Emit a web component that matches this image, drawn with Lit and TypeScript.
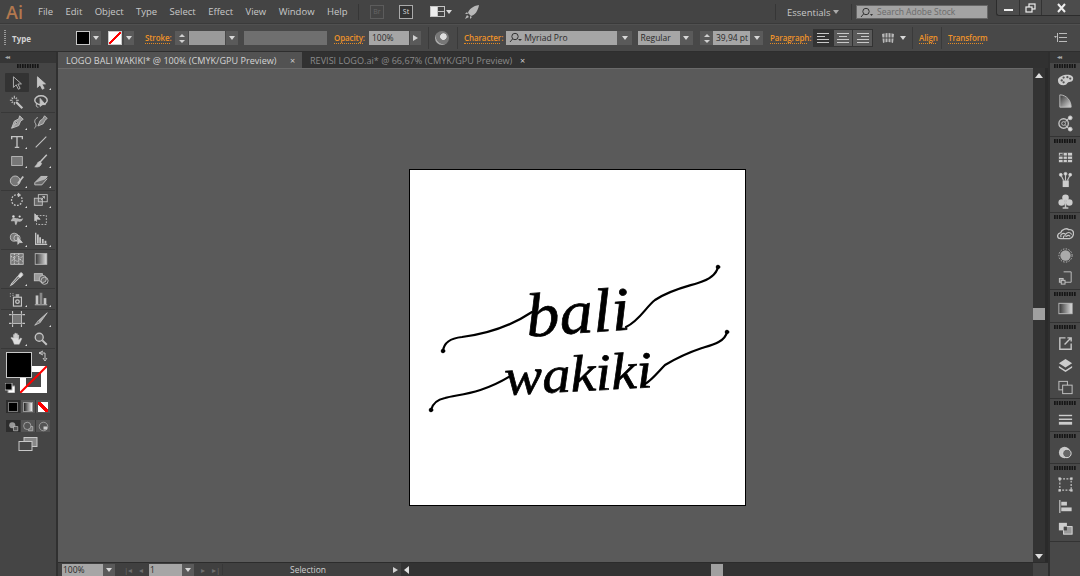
import { LitElement, html, css, svg } from 'lit';
import { customElement } from 'lit/decorators.js';

// tool and panel glyphs, 18x18 box, light grey stroke unless stated
const ICONS: Record<string, unknown> = {
  select: svg`<path d="M5 2v12l3-3 2.500 5 2-1-2.500-4.800 4-.2z" fill="#333" stroke="#bbb"/>`,
  direct: svg`<path d="M5 2v12l3-3 2.500 5 2-1-2.500-4.800 4-.2z" fill="#c4c4c4" stroke="#c4c4c4"/>`,
  wand: svg`<path d="M8 9l7 7" stroke-width="2.500"/><path d="M6 2v3M6 9v3M1 7h3M8 7h3M3 4l1.500 1.500M9 4L7.500 5.500M3 10l1.500-1.500" stroke-width="1.200"/>`,
  lasso: svg`<ellipse cx="9" cy="7" rx="7" ry="5" stroke-width="1.600"/><path d="M8 5v9l2.500-2.200 3.500.2z" fill="#c4c4c4"/><path d="M4 11c-1 2 0 4 2 4"/>`,
  pen: svg`<path d="M12 2l4 4-3 2-2 5-8 3 3-8 5-2.500z" fill="#9a9a9a"/><path d="M3 16l5-6"/><circle cx="8.500" cy="9.500" r="1" fill="#333"/>`,
  curve: svg`<path d="M13 2l3 3-2.500 2-2 4-6 2.500 2.500-6 3-2z" fill="#8a8a8a"/><path d="M5.500 4C2 5 1 9 3 11c1 2 0 4-1.500 5"/>`,
  type: svg`<path d="M3 6V3h12v3M9 3v12M6.500 15h5" stroke-width="1.500"/>`,
  line: svg`<path d="M3 15L15 3" stroke-width="1.200"/>`,
  rect: svg`<rect x="3" y="4" width="12" height="10" fill="#777" stroke="#bbb"/>`,
  brush: svg`<path d="M15.500 2L8 10" stroke-width="1.600"/><path d="M7.500 9.500c-2 .5-2.500 2-3 3.500L2 15.500c3 .5 7 0 7.500-4z" fill="#c4c4c4"/>`,
  shaper: svg`<circle cx="7" cy="10" r="5.500" fill="#777"/><path d="M10 13l6-8" stroke-width="2"/>`,
  eraser: svg`<path d="M2 12l7-7h7l-6 8H4z" fill="#b4b4b4"/><path d="M2 12v2.500h8l6-7" fill="#6a6a6a"/>`,
  rotate: svg`<path d="M14 6a6 6 0 1 1-3-2.500" stroke-dasharray="2 1.500" stroke-width="1.500"/><path d="M10 1l3 2.500-3 2" fill="#c4c4c4"/>`,
  scale: svg`<rect x="1.500" y="7" width="9" height="8" fill="#666"/><rect x="6" y="3" width="10" height="8"/><path d="M9 9l4-4M10.500 5H13v2.500"/>`,
  puppet: svg`<path d="M2 10c3-6 5-2 7-3 2 0 4 2 7 0-1 4-5 5-6 3l-2 5c-2-1-1-3-2-5-1 0-3 1-4 0z" fill="#b4b4b4" stroke="none"/><circle cx="5" cy="5" r="1.400" fill="#ddd" stroke="none"/><circle cx="12" cy="5" r="1.200" fill="#ddd" stroke="none"/>`,
  free: svg`<rect x="4" y="4" width="11" height="10" stroke-dasharray="2 1.500"/><path d="M2 2v8l2.500-2 3.500.2z" fill="#c4c4c4"/>`,
  builder: svg`<circle cx="6" cy="7" r="4.500" fill="#777"/><circle cx="9" cy="8" r="3.500"/><path d="M10 7v8l2-2h3z" fill="#c4c4c4"/>`,
  graph3: svg`<path d="M3 2v13h13" stroke-width="1.500"/><path d="M5.500 4v10M8 7v7M11 9v5M14 11v3" stroke-width="2"/>`,
  mesh: svg`<rect x="2" y="3" width="14" height="12" fill="#777"/><path d="M2 6l4 2 3-3 3 3 4-2M3 11l3-2 3 3 3-3 4 3M6 3v12M11 3v12" stroke="#ddd" stroke-dasharray="1.500 1"/>`,
  grad: svg`<defs><linearGradient id="g1"><stop offset="0" stop-color="#333"/><stop offset="1" stop-color="#ddd"/></linearGradient></defs><rect x="2.500" y="3" width="13" height="12" fill="url(#g1)" stroke="#bbb"/>`,
  dropper: svg`<path d="M14 2c2 1 2 3 .5 4L12 8l-2-2 2.500-3.500c.5-.5 1-.5 1.500-.5z" fill="#ddd"/><path d="M10 6l-7 8-1 2 2-1 7-7" stroke-width="1.200"/>`,
  blend: svg`<rect x="1.500" y="3" width="9" height="8" fill="#999"/><circle cx="11" cy="9" r="4" fill="#666"/><circle cx="13" cy="11" r="4"/>`,
  spray: svg`<rect x="5" y="7" width="9" height="10" stroke-width="1.300"/><rect x="7.500" y="3.500" width="4" height="3.500" fill="#aaa" stroke="none"/><circle cx="9.500" cy="12" r="2" stroke-width="1.500"/><path d="M1 3h1M4 3h1M1 6h1M4 5h1" stroke-width="1.200"/>`,
  bars: svg`<path d="M2 15.500h14"/><rect x="3" y="5" width="3" height="10" fill="#c4c4c4" stroke="none"/><rect x="7.500" y="2" width="3" height="13" fill="#888" stroke="none"/><rect x="12" y="8" width="3" height="7" fill="#c4c4c4" stroke="none"/>`,
  artboard: svg`<rect x="4" y="4" width="10" height="10" fill="#777"/><path d="M4 0v3M14 0v3M4 15v3M14 15v3M0 4h3M0 14h3M15 4h3M15 14h3" stroke-width="1.300"/>`,
  slice: svg`<path d="M16 2L6 11l2 2z" fill="#aaa"/><path d="M6 11l-4 5 6-3" fill="#777"/>`,
  hand: svg`<path d="M4 10L2 8l1-1 2 1V4h1.500v4-5.500H8V8 3h1.500v5-3.500H11V10l2-2 1.500 .5-3 6.500H6z" fill="#ddd" stroke="#bbb" stroke-width=".5"/>`,
  zoom: svg`<circle cx="7" cy="7" r="4.500" fill="#5b5b5b" stroke-width="1.500"/><path d="M10.500 10.500l5 5" stroke-width="2.200"/>`,
  palette: svg`<path d="M1 10c0-4 6-6 10-6s7 2 6 5-3 2-5 3-1 3-5 3-6-2-6-5z" fill="#ccc" stroke="none"/><circle cx="5" cy="10" r="1.200" fill="#555" stroke="none"/><circle cx="7" cy="7" r="1.200" fill="#555" stroke="none"/><circle cx="11" cy="6.500" r="1.200" fill="#555" stroke="none"/><circle cx="14" cy="8" r="1.200" fill="#555" stroke="none"/><circle cx="7" cy="12" r="1.200" fill="#555" stroke="none"/>`,
  guide: svg`<defs><linearGradient id="g2" x1="0" y1="0" x2="1" y2="1"><stop offset="0" stop-color="#333"/><stop offset="1" stop-color="#ddd"/></linearGradient></defs><path d="M3 2c7 0 12 6 12 13H3z" fill="url(#g2)" stroke="#bbb"/>`,
  nodes: svg`<circle cx="7" cy="9" r="5" stroke-width="1.400"/><circle cx="7" cy="9" r="2"/><path d="M9 7l5-5M9 11l5 5" stroke-width="1.200"/><circle cx="14" cy="3" r="2" fill="#ddd"/><circle cx="14" cy="15" r="2" fill="#ddd"/>`,
  swatches: svg`<rect x="2" y="4" width="14" height="10" fill="#ccc" stroke="none"/><path d="M2 7.500h14M2 11h14M6.500 4v10M11 4v10" stroke="#444"/><rect x="3" y="5" width="3" height="2" fill="#555" stroke="none"/>`,
  brushes: svg`<rect x="6" y="10" width="6.500" height="7" fill="#ccc" stroke="none"/><path d="M7 10L4 4M9 10V2M11 10l3-6" stroke-width="1.200"/><circle cx="4" cy="4" r="1.500" fill="#ddd"/><circle cx="9" cy="3" r="1.500" fill="#ddd"/><circle cx="14" cy="4" r="1.500" fill="#ddd"/>`,
  club: svg`<circle cx="9" cy="5" r="3.500" fill="#ccc" stroke="none"/><circle cx="5" cy="10" r="3.500" fill="#ccc" stroke="none"/><circle cx="13" cy="10" r="3.500" fill="#ccc" stroke="none"/><path d="M9 7v8M6 16h6" stroke-width="1.600"/>`,
  cloud: svg`<path d="M4 14.500c-4.500 0-4.500-5.500 0-6.500 1-4 6.500-5 8.500-3 4-1 6 3 4.500 6-1 2.500-3 3.500-6 3.500z" stroke-width="1.400"/><path d="M4.500 13c-2-3 2-5.500 4.500-3 2-3 5.500-2.500 6.500 0M7 14c-1-2 1-3.500 3-2 1.500-1.500 3-1 4 0" stroke-width="1.200"/>`,
  circle: svg`<circle cx="9" cy="9" r="5.500" fill="#aaa" stroke="none"/><circle cx="9" cy="9" r="7" stroke-dasharray="1.500 1.500"/>`,
  transformBox: svg`<path d="M7 3h8v11H8"/><rect x="2.500" y="10" width="4" height="4" fill="#888"/><rect x="4.500" y="12" width="4" height="4" fill="#555"/>`,
  gradBox: svg`<defs><linearGradient id="g3"><stop offset="0" stop-color="#333"/><stop offset="1" stop-color="#ddd"/></linearGradient></defs><rect x="2" y="3.500" width="14" height="11" fill="url(#g3)" stroke="#bbb"/>`,
  exportBox: svg`<path d="M9 3H3v12h12V9" stroke-width="1.500"/><path d="M8 10l7-7M11 3h4v4" stroke-width="1.500"/>`,
  layers: svg`<path d="M9 2l7 4.500-7 4.500-7-4.500z" fill="#ccc" stroke="none"/><path d="M2 9.500L9 14l7-4.500v1.800L9 16l-7-4.700z" fill="#ccc" stroke="none"/>`,
  artboards: svg`<rect x="2" y="2.500" width="9" height="9"/><rect x="6" y="6.500" width="10" height="9" fill="#484848"/>`,
  lines: svg`<rect x="2" y="4" width="14" height="1.500" fill="#ccc" stroke="none"/><rect x="2" y="8" width="14" height="1.500" fill="#ccc" stroke="none"/><rect x="2" y="11.500" width="14" height="3" fill="#ccc" stroke="none"/>`,
  appearance: svg`<circle cx="8" cy="9" r="6" fill="#c8c8c8" stroke="none"/><circle cx="10.500" cy="10" r="4.500" fill="#666" stroke="#ddd"/>`,
  dashbox: svg`<rect x="3" y="3" width="12" height="12" stroke-dasharray="2 1.500" stroke-width="1.300"/><rect x="1.500" y="1.500" width="2.500" height="2.500" fill="#ccc" stroke="none"/><rect x="14" y="1.500" width="2.500" height="2.500" fill="#ccc" stroke="none"/><rect x="1.500" y="14" width="2.500" height="2.500" fill="#ccc" stroke="none"/><rect x="14" y="14" width="2.500" height="2.500" fill="#ccc" stroke="none"/>`,
  alignLeft: svg`<path d="M3 2v14" stroke-width="1.300"/><rect x="4.500" y="4" width="6" height="4" fill="#ccc" stroke="none"/><rect x="4.500" y="10" width="11" height="4" fill="#ccc" stroke="none"/>`,
  pathfinder: svg`<rect x="2" y="3" width="8.500" height="8" fill="#ccc" stroke="none"/><rect x="7" y="7" width="9" height="8" fill="#999" stroke="#ddd"/><rect x="7" y="7" width="3.500" height="4" fill="#444" stroke="none"/>`,
  drawNormal: svg`<circle cx="7" cy="7" r="5" fill="#999" stroke="none"/><path d="M9 9h7v7H9z" fill="#555" stroke="#ccc"/>`,
  drawBehind: svg`<path d="M9 9h7v7H9z" fill="#777" stroke="#ccc"/><circle cx="7" cy="8" r="6" fill="#555" stroke="#ccc"/>`,
  drawInside: svg`<circle cx="9" cy="9" r="7"/><path d="M9 9h6v5H9z" fill="#ccc" stroke="none"/>`,
};

const icon = (name: string) =>
  html`<svg class="ico" viewBox="0 0 18 18" fill="none" stroke="#c4c4c4">${ICONS[name]}</svg>`;

// [icon, has flyout corner]
const TOOL_GROUPS: [string, boolean][][] = [
  [['select', false], ['direct', true], ['wand', false], ['lasso', false]],
  [['pen', true], ['curve', true], ['type', true], ['line', true], ['rect', true], ['brush', true], ['shaper', true], ['eraser', true]],
  [['rotate', true], ['scale', true], ['puppet', true], ['free', false], ['builder', true], ['graph3', true]],
  [['mesh', false], ['grad', false], ['dropper', true], ['blend', false]],
  [['spray', true], ['bars', true]],
  [['artboard', false], ['slice', true], ['hand', true], ['zoom', false]],
];

const DOCK_GROUPS: { cls: string; icons: string[] }[] = [
  { cls: 'd1', icons: ['palette', 'guide', 'nodes'] },
  { cls: 'd2', icons: ['swatches', 'brushes', 'club'] },
  { cls: 'd3', icons: ['cloud', 'circle', 'transformBox'] },
  { cls: 'd4', icons: ['gradBox'] },
  { cls: 'd5', icons: ['exportBox', 'layers', 'artboards'] },
  { cls: 'd6', icons: ['lines'] },
  { cls: 'd7', icons: ['appearance'] },
  { cls: 'd8', icons: ['dashbox', 'alignLeft', 'pathfinder'] },
];

const MENUS = ['File', 'Edit', 'Object', 'Type', 'Select', 'Effect', 'View', 'Window', 'Help'];

@customElement('app-root')
export class AppRoot extends LitElement {
  static styles = css`
    :host {
      display: block;
      width: 1080px;
      height: 576px;
      overflow: hidden;
      font-family: 'Open Sans', 'Noto Sans', sans-serif;
      font-size: 9px;
      color: #c8c8c8;
      background: #434343;
    }
    .app {
      display: flex;
      flex-direction: column;
      height: 576px;
    }
    .ico {
      display: block;
      width: 16px;
      height: 16px;
    }

    /* menu row */
    .menubar {
      height: 24px;
      flex: none;
      display: flex;
      align-items: center;
      background: #444444;
      border-bottom: 1px solid #3a3a3a;
      box-sizing: border-box;
      position: relative;
    }
    .ai {
      width: 38px;
      box-sizing: border-box;
      padding-left: 6px;
      font-size: 18px;
      font-weight: 600;
      color: #b2784e;
    }
    .menus {
      display: flex;
      gap: 12.4px;
      font-size: 9.5px;
      width: 320px;
    }
    .vsep {
      width: 1px;
      height: 16px;
      flex: none;
      background: #363636;
    }
    .badge {
      width: 12px;
      height: 12px;
      margin-left: 11px;
      border: 1px solid #5c5c5c;
      color: #666;
      font-size: 7px;
      line-height: 12px;
      text-align: center;
      flex: none;
    }
    .badge.on {
      margin-left: 15px;
      border-color: #aaa;
      background: #333;
      color: #ddd;
    }
    .arrange {
      width: 15px;
      height: 11px;
      margin-left: 17px;
      background: #c4c4c4;
      display: grid;
      grid-template-columns: 6px 6px;
      grid-template-rows: 4px 4px;
      gap: 1px;
      padding: 1px;
      box-sizing: border-box;
    }
    .arrange i {
      background: #444;
    }
    .arrange i:first-child {
      grid-row: span 2;
      background: #eee;
    }
    .caret {
      width: 0;
      height: 0;
      flex: none;
      border: 3px solid transparent;
      border-top: 4px solid #d8d8d8;
      border-bottom: 0;
    }
    .rocket {
      width: 16px;
      height: 16px;
      margin-left: 12px;
    }
    .essentials-wrap {
      display: flex;
      align-items: center;
      position: absolute;
      left: 775px;
      top: 3px;
      height: 18px;
    }
    .essentials {
      font-size: 9.5px;
      width: 57px;
      box-sizing: border-box;
      padding-left: 11px;
    }
    .essentials-wrap .vsep:last-child {
      margin-left: 12px;
    }
    .essentials-wrap .caret {
      border-top-color: #aaa;
    }
    .search {
      position: absolute;
      left: 856px;
      top: 5px;
      width: 132px;
      height: 14px;
      box-sizing: border-box;
      background: #a3a3a3;
      border: 1px solid #666;
      color: #6a6a6a;
      font-size: 8.5px;
      line-height: 12px;
      display: flex;
      align-items: center;
      gap: 4px;
      padding-left: 3px;
    }
    .search svg {
      width: 13px;
      height: 11px;
      flex: none;
    }
    .winbtns {
      position: absolute;
      right: 0;
      top: 0;
      display: flex;
      height: 15px;
      background: #4c4c4c;
      border: 1px solid #2c2c2c;
      border-top: 0;
      border-right: 0;
      border-bottom-left-radius: 3px;
    }
    .winbtns div {
      display: flex;
      align-items: center;
      justify-content: center;
      border-left: 1px solid #333;
    }
    .winbtns div:first-child {
      border-left: 0;
    }
    .winbtns .min {
      width: 22px;
    }
    .winbtns .max {
      width: 21px;
    }
    .winbtns .cls {
      width: 38px;
    }
    .winbtns svg {
      width: 11px;
      height: 10px;
    }

    /* control row */
    .control {
      height: 28px;
      flex: none;
      display: flex;
      align-items: center;
      background: #484848;
      border-top: 1px solid #505050;
      border-bottom: 1px solid #2e2e2e;
      box-sizing: border-box;
      padding-left: 4px;
      font-size: 8.5px;
    }
    .grip-v {
      width: 2px;
      height: 16px;
      flex: none;
      background-image: linear-gradient(#999 50%, transparent 50%);
      background-size: 2px 2px;
    }
    .type-label {
      font-weight: 700;
      margin-left: 6px;
      width: 64px;
      color: #d2d2d2;
      font-size: 8px;
    }
    .swatch {
      width: 14px;
      height: 14px;
      box-sizing: border-box;
      border: 1px solid #c8c8c8;
      flex: none;
    }
    .swatch.black {
      background: #000;
    }
    .swatch.none {
      background: linear-gradient(to top left, #fff 44%, #f00 44%, #f00 56%, #fff 56%);
      margin-left: 7px;
    }
    .dd {
      height: 14px;
      flex: none;
      background: #5a5a5a;
      display: flex;
      align-items: center;
      justify-content: center;
    }
    .link {
      color: #ef9329;
      flex: none;
      border-bottom: 1px dotted #e38a25;
      line-height: 10px;
      white-space: nowrap;
      font-size: 8px;
      font-weight: 600;
      letter-spacing: -0.1px;
    }
    .field {
      height: 14px;
      flex: none;
      box-sizing: border-box;
      background: #a6a6a6;
      color: #2a2a2a;
      padding-left: 3px;
      line-height: 14px;
      white-space: nowrap;
      overflow: hidden;
    }
    .field svg {
      vertical-align: -2px;
    }
    .field.blank {
      background: #9a9a9a;
    }
    .field.off {
      background: #6f6f6f;
    }
    .spin {
      width: 13px;
      height: 14px;
      flex: none;
      background: #5a5a5a;
      display: flex;
      flex-direction: column;
      align-items: center;
      justify-content: space-around;
      padding: 1px 0;
      box-sizing: border-box;
    }
    .spin i {
      width: 0;
      height: 0;
      border: 3px solid transparent;
      border-bottom: 3px solid #d0d0d0;
      border-top: 0;
    }
    .spin i:last-child {
      transform: scaleY(-1);
    }
    .tri-r {
      width: 0;
      height: 0;
      flex: none;
      border: 3px solid transparent;
      border-left: 5px solid #d0d0d0;
      border-right: 0;
    }
    .csep {
      width: 1px;
      height: 22px;
      flex: none;
      background: #3a3a3a;
    }
    .globe {
      width: 14px;
      height: 14px;
      flex: none;
      border-radius: 50%;
      background: radial-gradient(circle at 60% 40%, #ddd 0 25%, #777 30% 60%, #aaa 65%);
    }
    .aligns {
      display: flex;
      width: 60px;
      height: 18px;
      flex: none;
      background: #333;
      border: 1px solid #333;
      box-sizing: border-box;
      gap: 1px;
    }
    .aligns div {
      flex: 1;
      background: #5a5a5a;
      display: flex;
      flex-direction: column;
      align-items: center;
      justify-content: center;
      gap: 2px;
    }
    .aligns div.on {
      background: #333;
    }
    .aligns i {
      display: block;
      width: 12px;
      height: 1px;
      background: #c8c8c8;
    }
    .aligns .l i:nth-child(2) {
      width: 8px;
      margin-right: 4px;
    }
    .aligns .c i:nth-child(2) {
      width: 8px;
    }
    .aligns .r i:nth-child(2) {
      width: 8px;
      margin-left: 4px;
    }
    .warp {
      width: 14px;
      height: 13px;
      flex: none;
    }
    .panelmenu {
      width: 13px;
      height: 10px;
      flex: none;
      margin-left: auto;
      margin-right: 13px;
    }
    .m1 { margin-left: 1px; }
    .m2 { margin-left: 2px; }
    .m3 { margin-left: 3px; }
    .m45 { margin-left: 4.5px; }
    .m5 { margin-left: 5px; }
    .m55 { margin-left: 5.5px; }
    .m6 { margin-left: 6px; }
    .m65 { margin-left: 6.5px; }
    .m7 { margin-left: 7px; }
    .m8 { margin-left: 8px; }
    .m11 { margin-left: 11px; }
    .w10 { width: 10px; }
    .w11 { width: 11px; }
    .w12 { width: 12px; }
    .w13 { width: 13px; }
    .w135 { width: 13.5px; }
    .w15 { width: 15px; }
    .w17 { width: 17px; }
    .w25 { width: 25px; }
    .w29 { width: 29px; }
    .w35 { width: 35px; }
    .w36 { width: 36px; }
    .w37 { width: 37px; }
    .w40 { width: 40px; }
    .w42 { width: 42px; }
    .w83 { width: 83px; }
    .w111 { width: 111px; }

    /* body */
    .body {
      flex: 1;
      min-height: 0;
      display: flex;
    }
    .toolbar {
      width: 56px;
      flex: none;
      background: #454545;
      border-right: 2px solid #303030;
      display: flex;
      flex-direction: column;
    }
    .panel-head {
      height: 11px;
      flex: none;
      background: #363636;
      color: #aaa;
      font-size: 6px;
      line-height: 11px;
      padding-left: 5px;
      letter-spacing: -1px;
    }
    .grip-h {
      height: 4px;
      width: 22px;
      flex: none;
      margin: 1px auto 0;
      background-image: linear-gradient(90deg, #161616 60%, transparent 60%);
      background-size: 2.5px 4px;
    }
    .toolbar .grip-h {
      margin-bottom: 5px;
    }
    .tools {
      display: grid;
      grid-template-columns: 24px 24px;
      grid-auto-rows: 19.3px;
      padding: 0 4px;
      border-bottom: 1px solid #383838;
      margin: 0 1px;
    }
    .tool {
      position: relative;
      display: flex;
      align-items: center;
      justify-content: center;
    }
    .tool.active::before {
      content: '';
      position: absolute;
      inset: 0;
      background: #333;
      border-radius: 1px;
    }
    .tool .ico {
      position: relative;
    }
    .tool.fly::after {
      content: '';
      position: absolute;
      right: 2px;
      bottom: 2px;
      border: 1.5px solid transparent;
      border-right-color: #ddd;
      border-bottom-color: #ddd;
    }
    .colors {
      position: relative;
      height: 50px;
      flex: none;
    }
    .fillbox {
      position: absolute;
      left: 6px;
      top: 3px;
      width: 26px;
      height: 26px;
      box-sizing: border-box;
      background: #000;
      border: 1px solid #c8c8c8;
      z-index: 1;
    }
    .strokebox {
      position: absolute;
      left: 20px;
      top: 17px;
      width: 27px;
      height: 27px;
      box-sizing: border-box;
      background: #fff;
      padding: 6px;
    }
    .strokebox i {
      display: block;
      height: 100%;
      background: #4a4a4a;
    }
    .strokebox svg {
      position: absolute;
      inset: 0;
      width: 27px;
      height: 27px;
    }
    .swap {
      position: absolute;
      left: 38px;
      top: 1px;
      width: 10px;
      height: 12px;
    }
    .defaults {
      position: absolute;
      left: 5px;
      top: 34px;
      width: 10px;
      height: 10px;
    }
    .modes {
      display: flex;
      margin: 1px 6px 0;
      height: 13px;
      background: #3a3a3a;
      gap: 1px;
    }
    .modes > div {
      flex: 1;
      display: flex;
      align-items: center;
      justify-content: center;
      background: #555;
    }
    .modes > div.on {
      background: #2d2d2d;
    }
    .modes.second {
      margin-top: 7px;
      height: 12px;
    }
    .mini-swatch {
      width: 10px;
      height: 10px;
    }
    .black-mini {
      background: #000;
      border: 1px solid #777;
      box-sizing: border-box;
    }
    .grad-mini {
      background: linear-gradient(90deg, #222, #eee);
      border: 1px solid #999;
      box-sizing: border-box;
    }
    .none-mini {
      background: linear-gradient(to top right, #fff 38%, #f00 38%, #f00 62%, #fff 62%);
    }
    .modes .ico {
      width: 11px;
      height: 11px;
    }
    .screen {
      margin: 4px auto 0;
      width: 20px;
      height: 16px;
    }

    .center {
      flex: 1;
      min-width: 0;
      display: flex;
      flex-direction: column;
    }
    .tabs {
      height: 16px;
      flex: none;
      display: flex;
      background: #313131;
      line-height: 17px;
      white-space: nowrap;
    }
    .tab {
      display: flex;
      box-sizing: border-box;
      padding-left: 8px;
      color: #8a8a8a;
      width: 230px;
      font-size: 9.1px;
    }
    .tab.active {
      width: 244px;
      background: #525252;
      color: #d4d4d4;
    }
    .tab span {
      flex: 1;
    }
    .tab b {
      font-weight: 400;
      width: 12px;
      color: #ccc;
    }
    .work {
      flex: 1;
      min-height: 0;
      display: flex;
    }
    .canvas {
      flex: 1;
      min-width: 0;
      background: #5a5a5a;
      box-sizing: border-box;
      padding: 100px 0 0 351px;
      border-top: 1px solid #6a6a6a;
    }
    .artboard {
      width: 337px;
      height: 337px;
      box-sizing: border-box;
      background: #fff;
      border: 1px solid #000;
    }
    .artboard svg {
      display: block;
      width: 335px;
      height: 335px;
    }
    .script {
      font-family: 'Liberation Serif', serif;
      font-style: italic;
      fill: #000;
    }
    .vscroll {
      width: 15px;
      flex: none;
      box-sizing: border-box;
      background: #333;
      border-right: 3px solid #2a2a2a;
      display: flex;
      flex-direction: column;
      align-items: center;
      padding-top: 5px;
    }
    .vscroll .up,
    .vscroll .down {
      width: 0;
      height: 0;
      border: 4px solid transparent;
    }
    .vscroll .up {
      border-bottom: 5px solid #ddd;
      border-top: 0;
    }
    .vscroll .down {
      border-top: 5px solid #ddd;
      border-bottom: 0;
      margin-top: auto;
      margin-bottom: 3px;
    }
    .thumb {
      width: 12px;
      height: 12px;
      background: #a0a0a0;
      margin-top: 230px;
    }
    .status {
      height: 14px;
      flex: none;
      display: flex;
      align-items: center;
      background: #404040;
      border-top: 1px solid #2c2c2c;
      box-sizing: border-box;
      padding-left: 4px;
      font-size: 8.5px;
    }
    .status .field,
    .status .dd {
      height: 12px;
      line-height: 12px;
    }
    .status .field {
      padding-left: 1px;
    }
    .status .f41 {
      width: 41px;
    }
    .status .f33 {
      width: 33px;
    }
    .navs {
      display: flex;
      align-items: center;
      gap: 7px;
      width: 34px;
      box-sizing: border-box;
      color: #6e6e6e;
      flex: none;
      font-size: 8px;
      padding-left: 9px;
    }
    .navs.after {
      width: 28px;
      padding-left: 7px;
    }
    .tool-name {
      width: 170px;
      flex: none;
      text-align: center;
      color: #d0d0d0;
      border-left: 1px solid #383838;
    }
    .hscroll {
      flex: 1;
      min-width: 0;
      height: 13px;
      background: #333;
      display: flex;
      align-items: center;
      padding-left: 3px;
    }
    .hscroll i {
      width: 0;
      height: 0;
      border: 4px solid transparent;
      border-right: 5px solid #ddd;
      border-left: 0;
    }
    .hthumb {
      width: 12px;
      height: 12px;
      background: #a0a0a0;
      margin-left: 302px;
    }
    .corner {
      width: 15px;
      height: 13px;
      flex: none;
      background: #444;
    }

    .dock {
      flex: none;
      background: #484848;
      display: flex;
      flex-direction: column;
      border-left: 2px solid #2e2e2e;
      box-sizing: border-box;
      width: 32px;
    }
    .group {
      flex: none;
      display: flex;
      flex-direction: column;
      align-items: center;
      border-bottom: 1px solid #333;
      box-sizing: border-box;
    }
    .group .ico {
      width: 17px;
      height: 17px;
    }
    .group .cell {
      height: 22px;
      display: flex;
      align-items: center;
      justify-content: center;
    }
    .d1 { height: 74px; }
    .d2 { height: 76px; }
    .d3 { height: 77px; }
    .d4 { height: 33px; }
    .d5 { height: 76px; }
    .d6 { height: 33px; }
    .d7 { height: 32px; }
    .d8 { height: 78px; }
    .group .grip-h {
      margin: 2px auto 3px;
    }
    .group.d1 .grip-h {
      margin: 1px auto 0;
    }
    .group.d4 .grip-h {
      margin-bottom: 1px;
    }
  `;

  private dd(cls: string) {
    return html`<div class="dd ${cls}"><i class="caret"></i></div>`;
  }

  private renderMenuBar() {
    return html`
      <div class="menubar">
        <div class="ai">Ai</div>
        <nav class="menus">${MENUS.map((m) => html`<span>${m}</span>`)}</nav>
        <div class="vsep"></div>
        <div class="badge">Br</div>
        <div class="badge on">St</div>
        <div class="arrange"><i></i><i></i><i></i></div>
        <i class="caret m1"></i>
        <svg class="rocket" viewBox="0 0 16 16"><path d="M15 1C9 2 5 5 4 9l3 3c4-1 7-5 8-11zM3 8l-2 2h3zM8 13l-2 2v-3zM3 11l-2 4 4-2z" fill="#b8b8b8" /></svg>
        <div class="essentials-wrap">
          <div class="vsep"></div>
          <div class="essentials">Essentials</div>
          <i class="caret"></i>
          <div class="vsep"></div>
        </div>
        <div class="search">
          <svg viewBox="0 0 13 11" fill="none" stroke="#333"><circle cx="6" cy="4.500" r="3.200" /><path d="M3.500 7L1 10" /><path d="M10 7h3l-1.500 2z" fill="#333" stroke="none" /></svg>
          <span>Search Adobe Stock</span>
        </div>
        <div class="winbtns">
          <div class="min"><svg viewBox="0 0 11 10"><rect x="1" y="6" width="9" height="2" fill="#eee" /></svg></div>
          <div class="max"><svg viewBox="0 0 11 10" fill="none" stroke="#eee" stroke-width="1.200"><rect x="4" y="1" width="6" height="5" /><rect x="1" y="4" width="6" height="5" fill="#4c4c4c" /></svg></div>
          <div class="cls"><svg viewBox="0 0 11 10" fill="none" stroke="#eee" stroke-width="2"><path d="M2 1l7 8M9 1L2 9" /></svg></div>
        </div>
      </div>
    `;
  }

  private renderControlBar() {
    return html`
      <div class="control">
        <div class="grip-v"></div>
        <span class="type-label">Type</span>
        <div class="swatch black"></div>
        ${this.dd('m1 w10')}
        <div class="swatch none"></div>
        ${this.dd('m2 w10')}
        <span class="link m11 w25">Stroke:</span>
        <div class="spin m5"><i></i><i></i></div>
        <div class="field blank m1 w36"></div>
        ${this.dd('m1 w12')}
        <div class="field off m6 w83"></div>
        <span class="link m7 w29">Opacity:</span>
        <div class="field m6 w40">100%</div>
        <div class="dd m1 w11"><i class="tri-r"></i></div>
        <div class="csep m7"></div>
        <div class="globe m6"></div>
        <div class="csep m8"></div>
        <span class="link m6 w36">Character:</span>
        <div class="field m6 w111">
          <svg width="13" height="11" viewBox="0 0 13 11" fill="none" stroke="#333"><circle cx="6" cy="4.500" r="3.200" /><path d="M3.500 7L1 10" /><path d="M9 7h4l-2 2z" fill="#333" stroke="none" /></svg>
          Myriad Pro
        </div>
        ${this.dd('w15')}
        <div class="field m55 w42">Regular</div>
        ${this.dd('w135')}
        <div class="spin m7"><i></i><i></i></div>
        <div class="field w37">39,94 pt</div>
        ${this.dd('w13')}
        <span class="link m7 w37">Paragraph:</span>
        <div class="aligns m6">
          <div class="l on"><i></i><i></i><i></i><i></i></div>
          <div class="c"><i></i><i></i><i></i><i></i></div>
          <div class="r"><i></i><i></i><i></i><i></i></div>
        </div>
        <svg class="warp m8" viewBox="0 0 14 13" fill="#b8b8b8"><path d="M1 2q6-2 12 0l-1 9q-5-2-10 0z" /><path d="M4 1v11M7 1v11M10 1v11M1 6h12" stroke="#484848" /></svg>
        <i class="caret m5"></i>
        <div class="csep m6"></div>
        <span class="link m6 w17">Align</span>
        <div class="csep m45"></div>
        <span class="link m65 w35">Transform</span>
        <svg class="panelmenu" viewBox="0 0 13 10" fill="#bbb"><path d="M5 0h8v1H5zM5 4h8v1H5zM5 8h8v1H5z" /><path d="M0 3h3L1.500 5z" /><rect x="3" y="0" width="1" height="9" /></svg>
      </div>
    `;
  }

  private renderToolbar() {
    return html`
      <aside class="toolbar">
        <div class="panel-head">◂◂</div>
        <div class="grip-h"></div>
        ${TOOL_GROUPS.map(
          (group) => html`<div class="tools">
            ${group.map(
              ([name, fly]) => html`<div class="tool ${fly ? 'fly' : ''} ${name === 'select' ? 'active' : ''}">${icon(name)}</div>`,
            )}
          </div>`,
        )}
        <div class="colors">
          <div class="fillbox"></div>
          <div class="strokebox">
            <i></i>
            <svg viewBox="0 0 27 27"><path d="M0 27L27 0" stroke="#f00" stroke-width="2" /></svg>
          </div>
          <svg class="swap" viewBox="0 0 10 12" fill="none" stroke="#c8c8c8"><path d="M1 3h6v6M5 1L1 3l4 2" /><path d="M5 8l2 3 2-3" /></svg>
          <svg class="defaults" viewBox="0 0 10 10"><rect x="3" y="3" width="7" height="7" fill="#fff" stroke="#999" /><rect x="0" y="0" width="7" height="7" fill="#000" stroke="#bbb" /></svg>
        </div>
        <div class="modes">
          <div class="on"><div class="mini-swatch black-mini"></div></div>
          <div><div class="mini-swatch grad-mini"></div></div>
          <div><div class="mini-swatch none-mini"></div></div>
        </div>
        <div class="modes second">
          <div class="on">${icon('drawNormal')}</div>
          <div>${icon('drawBehind')}</div>
          <div>${icon('drawInside')}</div>
        </div>
        <svg class="screen" viewBox="0 0 20 16" fill="none" stroke="#c8c8c8"><rect x="6" y="1.500" width="13" height="9" fill="#888" /><rect x="1" y="5.500" width="13" height="9" fill="#484848" /></svg>
      </aside>
    `;
  }

  private renderArtboard() {
    return html`
      <div class="artboard">
        <svg viewBox="410 170 335 335" fill="none" stroke="#000" stroke-linecap="round">
          <!-- swashes of the lettering -->
          <path d="M443 351C444 342 452 338 462 337C478 335 505 330 532 312" stroke-width="2.2" />
          <path d="M626 327C640 320 645 308 655 300C670 290 685 287 698 283C708 280 716 276 718 267" stroke-width="2.2" />
          <path d="M431 410C433 402 440 399 445 398C458 394 480 395 512 375" stroke-width="2.2" />
          <path d="M645 384C652 380 658 372 665 365C680 356 690 352 702 348C712 345 725 342 727 332" stroke-width="2.2" />
          <circle cx="443" cy="351" r="1.800" fill="#000" />
          <circle cx="718" cy="267" r="1.800" fill="#000" />
          <circle cx="431" cy="410" r="1.800" fill="#000" />
          <circle cx="727" cy="332" r="1.800" fill="#000" />
          <text class="script" stroke-width=".7" transform="rotate(-4 580 330)" x="527" y="333" font-size="62" textLength="104" lengthAdjust="spacingAndGlyphs">bali</text>
          <text class="script" stroke-width=".7" transform="rotate(-3 580 390)" x="505" y="391" font-size="52" textLength="148" lengthAdjust="spacingAndGlyphs">wakiki</text>
        </svg>
      </div>
    `;
  }

  private renderStatus() {
    return html`
      <div class="status">
        <div class="field f41">100%</div>
        ${this.dd('w12')}
        <div class="navs"><span>|◂</span><span>◂</span></div>
        <div class="field f33">1</div>
        ${this.dd('w12')}
        <div class="navs after"><span>▸</span><span>▸|</span></div>
        <div class="tool-name">Selection</div>
        <i class="tri-r"></i>
        <div class="m3"></div>
        <div class="hscroll"><i></i><div class="hthumb"></div></div>
        <div class="corner"></div>
      </div>
    `;
  }

  private renderDock() {
    return html`
      <aside class="dock">
        <div class="panel-head">&nbsp;&nbsp;&nbsp;&nbsp;◂◂</div>
        ${DOCK_GROUPS.map(
          (group) => html`<div class="group ${group.cls}">
            <div class="grip-h"></div>
            ${group.icons.map((name) => html`<div class="cell">${icon(name)}</div>`)}
          </div>`,
        )}
      </aside>
    `;
  }

  render() {
    return html`
      <div class="app">
        ${this.renderMenuBar()} ${this.renderControlBar()}
        <div class="body">
          ${this.renderToolbar()}
          <main class="center">
            <div class="tabs">
              <div class="tab active"><span>LOGO BALI WAKIKI* @ 100% (CMYK/GPU Preview)</span><b>×</b></div>
              <div class="tab"><span>REVISI LOGO.ai* @ 66,67% (CMYK/GPU Preview)</span><b>×</b></div>
            </div>
            <div class="work">
              <div class="canvas">${this.renderArtboard()}</div>
              <div class="vscroll">
                <i class="up"></i>
                <div class="thumb"></div>
                <i class="down"></i>
              </div>
            </div>
            ${this.renderStatus()}
          </main>
          ${this.renderDock()}
        </div>
      </div>
    `;
  }
}
